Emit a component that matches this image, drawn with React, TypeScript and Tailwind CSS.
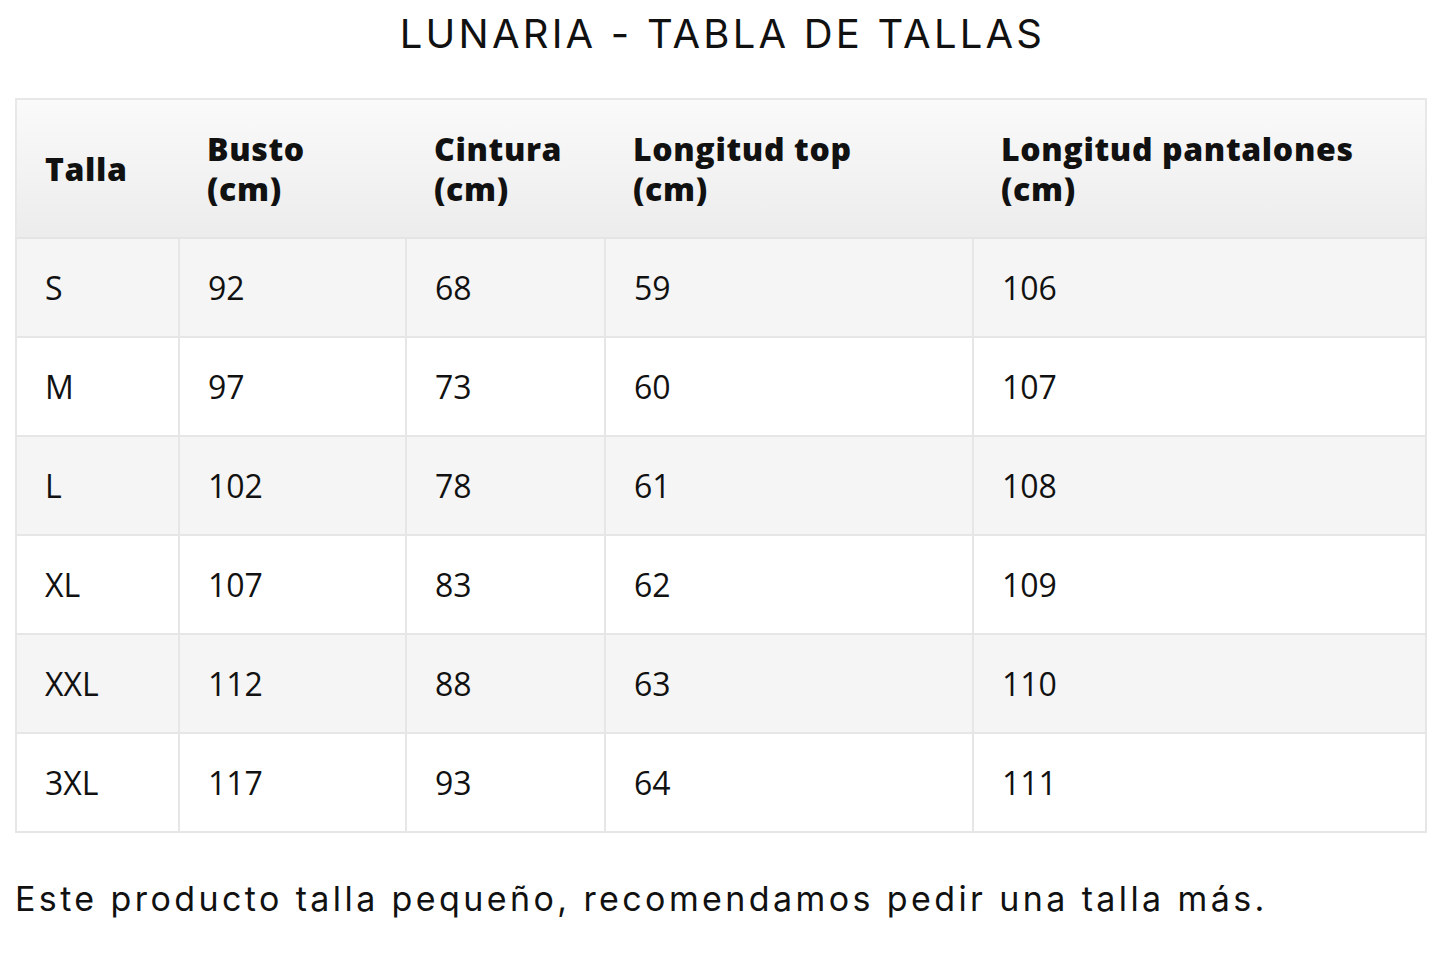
const rows = [
  ["S", "92", "68", "59", "106"],
  ["M", "97", "73", "60", "107"],
  ["L", "102", "78", "61", "108"],
  ["XL", "107", "83", "62", "109"],
  ["XXL", "112", "88", "63", "110"],
  ["3XL", "117", "93", "64", "111"],
];

const widths = ["w-[163px]", "w-[227px]", "w-[199px]", "w-[368px]", "w-auto"];

export default function App() {
  return (
    <div className="min-h-[969px] w-[1445px] bg-white text-[#111]">
      <h1 className="pt-[9px] text-center font-['Inter',sans-serif] text-[40px] font-normal leading-[50px] tracking-[0.08em]">
        LUNARIA - TABLA DE TALLAS
      </h1>

      <div className="px-[15px] pt-[39px]">
        <table className="w-[1412px] border-collapse border-2 border-[#e8e8e8] font-['Open_Sans',sans-serif] text-[32px]">
          <thead>
            <tr className="h-[139px] bg-gradient-to-b from-[#fafafa] to-[#ececec] text-left">
              {["Talla", "Busto (cm)", "Cintura (cm)", "Longitud top (cm)", "Longitud pantalones (cm)"].map((h, i) => (
                <th
                  key={h}
                  className={`${widths[i]} border-b-2 border-[#e4e4e4] px-[28px] align-middle text-[32px] font-extrabold leading-[40px] tracking-[0.02em]`}
                >
                  {h.includes("(") ? (
                    <>
                      {h.replace(" (cm)", "")}
                      <br />
                      (cm)
                    </>
                  ) : (
                    h
                  )}
                </th>
              ))}
            </tr>
          </thead>
          <tbody>
            {rows.map((r, ri) => (
              <tr key={r[0]} className={`h-[99px] ${ri % 2 === 0 ? "bg-[#f5f5f5]" : "bg-white"}`}>
                {r.map((c, ci) => (
                  <td key={ci} className="border-2 border-[#e6e6e6] px-[28px] align-middle leading-[40px]">
                    {c}
                  </td>
                ))}
              </tr>
            ))}
          </tbody>
        </table>

        <p className="pt-[42px] font-['Inter',sans-serif] text-[34px] leading-[48px] tracking-[0.1em]">
          Este producto talla pequeño, recomendamos pedir una talla más.
        </p>
      </div>
    </div>
  );
}
